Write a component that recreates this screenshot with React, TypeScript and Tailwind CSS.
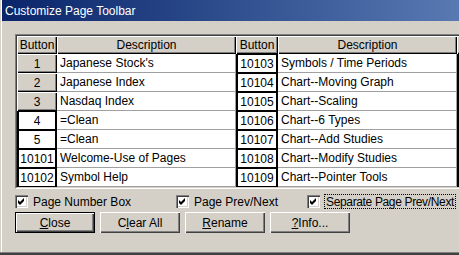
import React from "react";

const FONT = { fontFamily: '"Liberation Sans", Arial, sans-serif' };

const left = [
  { b: "1", d: "Japanese Stock's", raised: true },
  { b: "2", d: "Japanese Index", raised: true },
  { b: "3", d: "Nasdaq Index", raised: true },
  { b: "4", d: "=Clean" },
  { b: "5", d: "=Clean" },
  { b: "10101", d: "Welcome-Use of Pages" },
  { b: "10102", d: "Symbol Help" },
];

const right = [
  { b: "10103", d: "Symbols / Time Periods" },
  { b: "10104", d: "Chart--Moving Graph" },
  { b: "10105", d: "Chart--Scaling" },
  { b: "10106", d: "Chart--6 Types" },
  { b: "10107", d: "Chart--Add Studies" },
  { b: "10108", d: "Chart--Modify Studies" },
  { b: "10109", d: "Chart--Pointer Tools" },
];

const raised =
  "bg-[#d4d0c8] shadow-[inset_1px_1px_0_#ffffff,inset_-1px_-1px_0_#000000,inset_-2px_-2px_0_#808080]";

function HeaderCell({ w, children }: { w: string; children?: React.ReactNode }) {
  return (
    <div className={`${w} h-[18px] shrink-0 flex items-center justify-center ${raised}`}>
      {children}
    </div>
  );
}

function FramedCell({ w, children }: { w: string; children: React.ReactNode }) {
  return (
    <div
      className={`${w} h-[19px] shrink-0 bg-white border-x-2 border-y border-black flex items-center justify-center`}
    >
      {children}
    </div>
  );
}

function ButtonCell({ children }: { children: React.ReactNode }) {
  return (
    <div className={`w-[40px] h-[19px] shrink-0 flex items-center justify-center ${raised}`}>
      {children}
    </div>
  );
}

function DescCell({ children }: { children: React.ReactNode }) {
  return (
    <div className="w-[179px] h-[19px] shrink-0 bg-white border-r border-b border-[#a0a0a0] pl-[3px] flex items-center whitespace-nowrap">
      {children}
    </div>
  );
}

function Check() {
  return (
    <div className="w-[13px] h-[13px] shrink-0 bg-white shadow-[inset_1px_1px_0_#808080,inset_2px_2px_0_#404040,inset_-1px_-1px_0_#ffffff,inset_-2px_-2px_0_#d4d0c8]">
      <svg width="13" height="13" viewBox="0 0 13 13">
        <polygon points="3,5 5,7 9,3 9,6 5,10 3,8" fill="#000" />
      </svg>
    </div>
  );
}

function Btn({ children, def }: { children: React.ReactNode; def?: boolean }) {
  if (def) {
    return (
      <div className="w-[80px] h-[21px] shrink-0 border border-black">
        <div className="w-full h-full flex items-center justify-center bg-[#d4d0c8] shadow-[inset_1px_1px_0_#ffffff,inset_-1px_-1px_0_#404040,inset_-2px_-2px_0_#808080]">
          {children}
        </div>
      </div>
    );
  }
  return (
    <div className="w-[80px] h-[21px] shrink-0 flex items-center justify-center bg-[#d4d0c8] shadow-[inset_1px_1px_0_#ffffff,inset_-1px_-1px_0_#404040,inset_-2px_-2px_0_#808080]">
      {children}
    </div>
  );
}

export default function App() {
  return (
    <div
      style={FONT}
      className="w-[459px] h-[255px] overflow-hidden bg-[#d4d0c8] text-[12px] text-black flex flex-col pl-[2px] shadow-[inset_0_-2px_0_#404040,inset_0_-3px_0_#808080,inset_1px_0_0_#d4d0c8,inset_2px_0_0_#ffffff]"
    >
      <div className="h-[21px] shrink-0 flex items-center pl-[3px] text-white bg-gradient-to-r from-[#0a246a] to-[#5879b2] whitespace-nowrap">
        Customize Page Toolbar
      </div>
      <div className="pl-[13px] pt-[13px] flex flex-col">
        <div className="w-[600px] border-t border-l border-b border-t-[#808080] border-l-[#808080] border-b-white">
          <div className="border-t border-l border-b border-t-[#404040] border-l-[#404040] border-b-[#d4d0c8] flex flex-col">
            <div className="flex">
              <HeaderCell w="w-[40px]">Button</HeaderCell>
              <HeaderCell w="w-[179px]">Description</HeaderCell>
              <HeaderCell w="w-[42px]">Button</HeaderCell>
              <HeaderCell w="w-[179px]">Description</HeaderCell>
              <HeaderCell w="w-[60px]" />
            </div>
            {left.map((l, i) => (
              <div key={i} className="flex">
                {l.raised ? (
                  <ButtonCell>{l.b}</ButtonCell>
                ) : (
                  <FramedCell w="w-[40px]">{l.b}</FramedCell>
                )}
                <DescCell>{l.d}</DescCell>
                <FramedCell w="w-[42px]">{right[i].b}</FramedCell>
                <DescCell>{right[i].d}</DescCell>
                <FramedCell w="w-[60px]">{""}</FramedCell>
              </div>
            ))}
          </div>
        </div>

        <div className="mt-[5px] h-[15px] flex items-center whitespace-nowrap">
          <div className="w-[161px] shrink-0 flex items-center">
            <Check />
            <span className="ml-[5px]">Page Number Box</span>
          </div>
          <div className="w-[131px] shrink-0 flex items-center">
            <Check />
            <span className="ml-[5px]">Page Prev/Next</span>
          </div>
          <div className="shrink-0 flex items-center">
            <Check />
            <span className="ml-[4px] px-[1px] h-[15px] flex items-center border border-dotted border-black tracking-[-0.35px]">
              Separate Page Prev/Next
            </span>
          </div>
        </div>

        <div className="mt-[3px] flex gap-[5px] whitespace-nowrap">
          <Btn def>
            <span>
              <u>C</u>lose
            </span>
          </Btn>
          <Btn>
            <span>
              C<u>l</u>ear All
            </span>
          </Btn>
          <Btn>
            <span>
              <u>R</u>ename
            </span>
          </Btn>
          <Btn>
            <span>
              <u>?</u>Info...
            </span>
          </Btn>
        </div>
      </div>
    </div>
  );
}
